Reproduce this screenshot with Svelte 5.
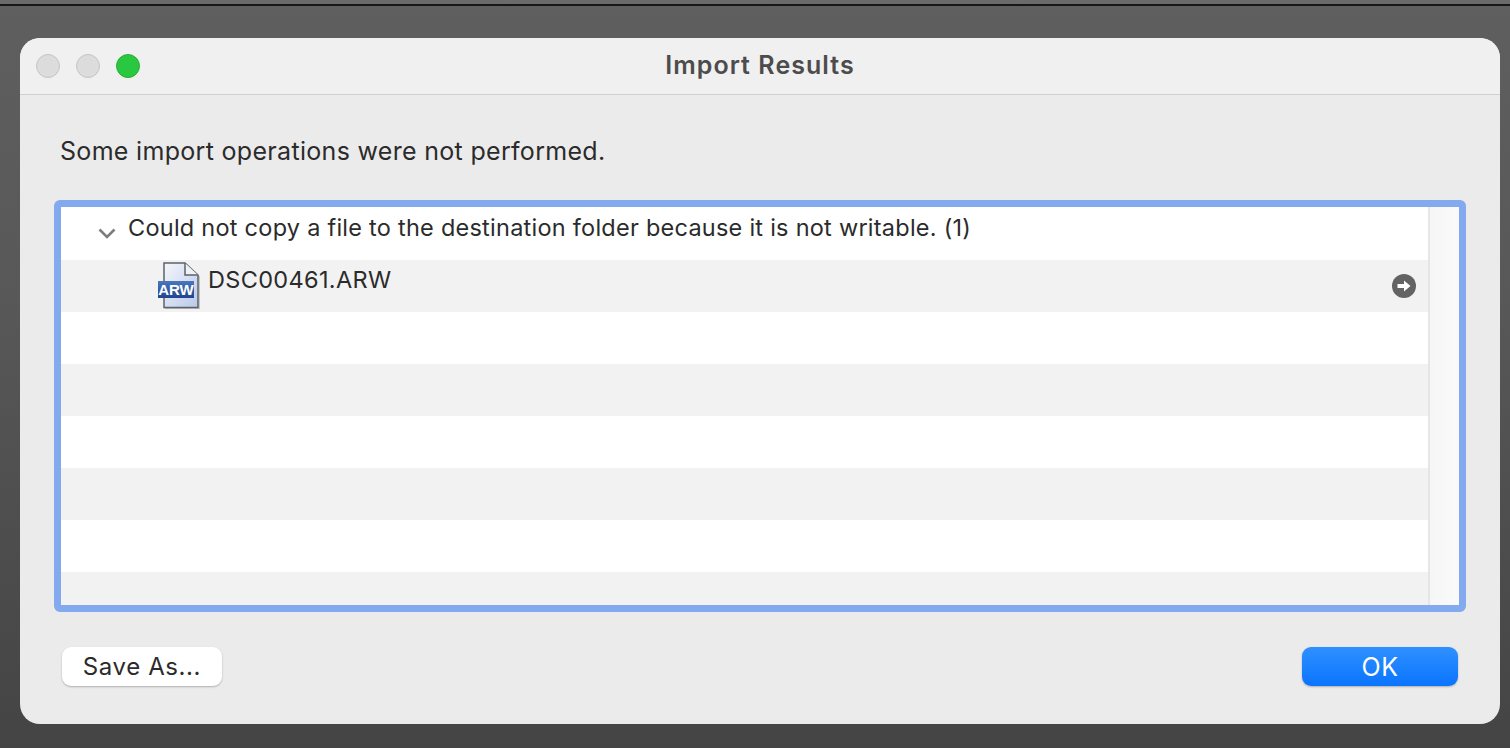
<script lang="ts">
	const emptyRows = [0, 1, 2, 3, 4, 5];
</script>

<div class="desktop">
	<div class="topline"></div>
	<section class="window">
		<header class="titlebar">
			<div class="lights">
				<span class="light"></span>
				<span class="light"></span>
				<span class="light green"></span>
			</div>
			<h1>Import Results</h1>
		</header>

		<div class="content">
			<p class="message">Some import operations were not performed.</p>

			<div class="list">
				<div class="rows">
					<div class="row group">
						<svg class="chevron" width="18" height="12" viewBox="0 0 18 12">
							<path d="M1.5 2.5 L9 10 L16.5 2.5" fill="none" stroke="#7d7d7d" stroke-width="2.6" />
						</svg>
						<span>Could not copy a file to the destination folder because it is not writable. (1)</span>
					</div>
					<div class="row file alt">
						<div class="fileicon">
							<svg width="44" height="47" viewBox="0 0 44 47">
								<defs>
									<linearGradient id="page" x1="0" y1="0" x2="1" y2="1">
										<stop offset="0" stop-color="#f4f6fb" />
										<stop offset="1" stop-color="#b9c9ea" />
									</linearGradient>
									<linearGradient id="tag" x1="0" y1="0" x2="0" y2="1">
										<stop offset="0" stop-color="#4a77bd" />
										<stop offset="1" stop-color="#20458f" />
									</linearGradient>
								</defs>
								<path d="M7 1 H28 L41 13 V45.5 H7 Z" fill="url(#page)" stroke="#5e6269" stroke-width="1.5" />
								<path d="M28 1 V13 H41" fill="#eef1f7" stroke="#5e6269" stroke-width="1.5" />
								<path d="M8 46.6 H42.4 V14" fill="none" stroke="#000" stroke-opacity="0.18" stroke-width="1.2" />
								<rect x="1" y="19" width="36" height="17" fill="url(#tag)" />
							</svg>
							<span class="tag">ARW</span>
						</div>
						<span class="filename">DSC00461.ARW</span>
						<span class="goto">
							<svg width="24" height="24" viewBox="0 0 24 24">
								<circle cx="12" cy="12" r="12" fill="#636363" />
								<path d="M5.5 10 H12 V6.5 L18.5 12 L12 17.5 V14 H5.5 Z" fill="#fff" />
							</svg>
						</span>
					</div>
					{#each emptyRows as i (i)}
						<div class="row" class:alt={i % 2 === 1}></div>
					{/each}
				</div>
				<div class="scrolltrack"></div>
			</div>

			<footer class="actions">
				<button type="button" class="btn">Save As...</button>
				<button type="button" class="btn primary">OK</button>
			</footer>
		</div>
	</section>
</div>

<style>
	:global(body) {
		margin: 0;
		background: #4a4a4a;
	}

	.desktop {
		height: 748px;
		box-sizing: border-box;
		overflow: hidden;
		background: linear-gradient(180deg, #5f5f5f 0%, #585858 40%, #444444 100%);
		font-family: Inter, "Liberation Sans", sans-serif;
		color: #2b2b2b;
	}

	.topline {
		height: 4px;
		background: #6a6a6a;
		border-bottom: 2px solid #161616;
		margin-bottom: 32px;
	}

	.window {
		width: 1480px;
		height: 686px;
		margin-left: 20px;
		background: #ebebeb;
		border-radius: 20px;
		overflow: hidden;
	}

	.titlebar {
		height: 57px;
		box-sizing: border-box;
		border-bottom: 1px solid #d0d0d0;
		background: #f0f0f0;
		display: flex;
		align-items: center;
		justify-content: center;
		position: relative;
	}

	.titlebar h1 {
		margin: 0 0 2px;
		font-size: 25px;
		font-weight: 600;
		letter-spacing: 1.05px;
		color: #4c4c4c;
	}

	.lights {
		position: absolute;
		left: 16px;
		top: 16px;
		display: flex;
		gap: 16px;
	}

	.light {
		width: 24px;
		height: 24px;
		box-sizing: border-box;
		border-radius: 50%;
		background: #dcdcdc;
		border: 1px solid #c4c4c4;
	}

	.light.green {
		background: #2ac740;
		border-color: #25b138;
	}

	.content {
		padding: 0 34px;
	}

	.message {
		margin: 0;
		padding: 40px 0 0 6px;
		height: 65px;
		font-size: 25px;
		line-height: 32px;
		letter-spacing: 0.31px;
		color: #2b2b2b;
	}

	.list {
		width: 1412px;
		height: 412px;
		box-sizing: border-box;
		border: 7px solid #83a9ef;
		border-radius: 6px;
		background: #fff;
		display: flex;
		overflow: hidden;
	}

	.rows {
		flex: 1;
		min-width: 0;
	}

	.row {
		height: 52px;
		background: #fff;
		display: flex;
		align-items: flex-start;
		font-size: 23.5px;
		line-height: 30px;
		letter-spacing: 0.25px;
		color: #2b2b2b;
		white-space: nowrap;
	}

	.row.alt {
		background: #f2f2f2;
	}

	.row.group {
		height: 53px;
		padding-left: 37px;
		padding-top: 6px;
		box-sizing: border-box;
	}

	.chevron {
		margin-top: 14px;
		margin-right: 12px;
	}

	.row.file {
		padding-left: 96px;
		padding-top: 2px;
		box-sizing: border-box;
		position: relative;
	}

	.fileicon {
		width: 42px;
		height: 46px;
		position: relative;
		margin-right: 9px;
	}

	.fileicon svg {
		display: block;
	}

	.tag {
		position: absolute;
		left: 1px;
		top: 19px;
		width: 36px;
		height: 17px;
		line-height: 17px;
		text-align: center;
		font-family: "Liberation Sans", sans-serif;
		font-size: 15px;
		font-weight: 700;
		letter-spacing: 0;
		color: #fff;
	}

	.filename {
		padding-top: 3px;
		letter-spacing: 0.33px;
	}

	.goto {
		position: absolute;
		right: 12px;
		top: 14px;
		line-height: 0;
	}

	.scrolltrack {
		width: 31px;
		box-sizing: border-box;
		border-left: 2px solid #e6e6e6;
		background: linear-gradient(90deg, #f6f6f6, #fafafa);
	}

	.actions {
		display: flex;
		justify-content: space-between;
		align-items: center;
		margin-top: 35px;
		padding: 0 8px;
	}

	.btn {
		width: 160px;
		height: 39px;
		border: none;
		border-radius: 9px;
		background: #fff;
		box-shadow: 0 1px 2px rgba(0, 0, 0, 0.25);
		font-family: inherit;
		font-size: 24px;
		letter-spacing: 0.6px;
		color: #2b2b2b;
		padding: 0;
	}

	.btn.primary {
		width: 156px;
		background: linear-gradient(180deg, #2f90ff 0%, #0a74ff 100%);
		color: #fff;
		font-size: 25px;
	}
</style>
